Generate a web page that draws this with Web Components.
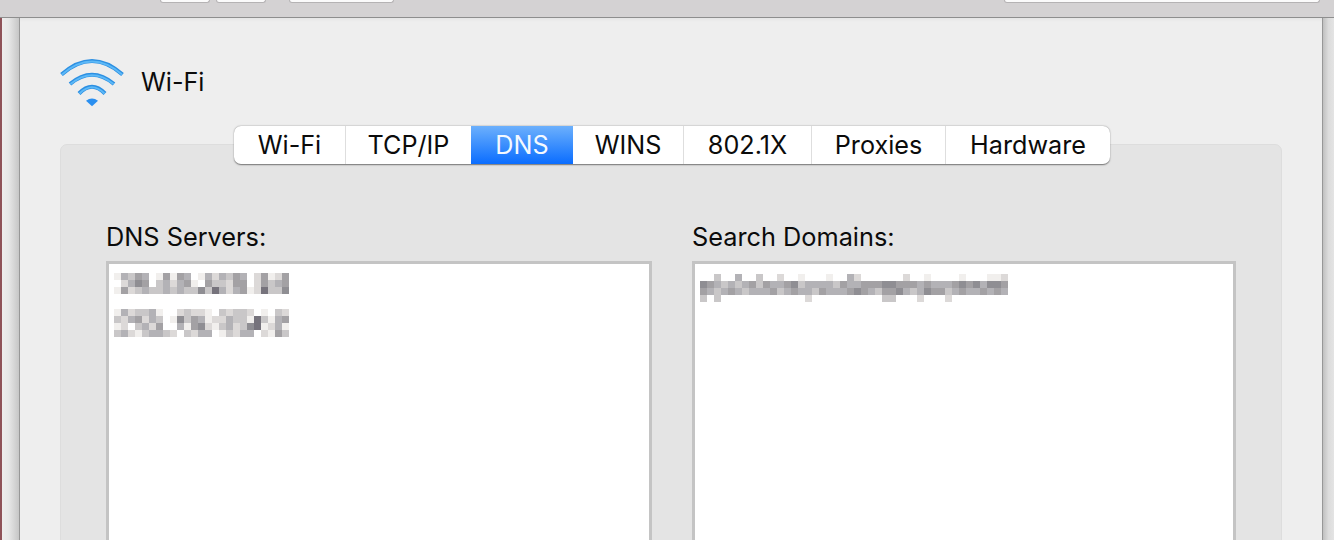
<!DOCTYPE html>
<html lang="en"><head><meta charset="utf-8"><title>Wi-Fi DNS</title>
<style>html,body{margin:0;padding:0;background:#eee}body{width:1334px;height:540px;overflow:hidden;font-family:Inter,"Liberation Sans",sans-serif}</style>
</head><body>
<net-window>
  <net-toolbar slot="toolbar"></net-toolbar>
  <net-header slot="header">Wi-Fi</net-header>
  <net-tabs slot="tabs"></net-tabs>
  <net-panel slot="panel">
    <net-list label="DNS Servers:">
      <net-mosaic cols="25" top="9" data-rows="1435401515401424354025125|0246503424510533255025345|1523433434336374245127336"></net-mosaic>
      <net-mosaic cols="25" top="15" data-rows="1423341002322103233201032|3245243016354122433173145|1203425004156213423671241|3421344320324401324402153"></net-mosaic>
    </net-list>
    <net-list label="Search Domains:">
      <net-mosaic cols="44" top="10" data-rows="00300400300200100010042000000200100001000112|65434345354456344443544555665554544456564665|54345434445345443544456543556434655345445454|30300000000000020000000000330002000200000000"></net-mosaic>
    </net-list>
  </net-panel>
</net-window>
<script>
const def=(name,html,setup)=>customElements.define(name,class extends HTMLElement{
  connectedCallback(){if(this.shadowRoot)return;const r=this.attachShadow({mode:'open'});r.innerHTML=html;if(setup)setup(this,r);}
});
def('net-window',`<style>
:host{display:flex;flex-direction:column;width:1334px;height:540px;overflow:hidden;background:#eee}
.top{flex:none}
.body{flex:1;display:flex;min-height:0}
.red{flex:none;width:2px;background:#8f5258}
.lstrip{flex:none;width:17px;background:linear-gradient(90deg,#efeded,#e6e6e6 40%,#c6c6c6)}
.sheet{flex:none;width:1302px;border-left:1px solid #979797;border-right:1px solid #979797;background:linear-gradient(#e6e6e6,#eeeeee 4px);display:flex;flex-direction:column}
.rstrip{flex:1;background:linear-gradient(90deg,#c0c0c0,#dcdcdc 50%,#e4e4e4)}
</style>
<div class="top"><slot name="toolbar"></slot></div>
<div class="body"><div class="red"></div><div class="lstrip"></div>
<div class="sheet"><slot name="header"></slot><slot name="tabs"></slot><slot name="panel"></slot></div>
<div class="rstrip"></div></div>`);
def('net-toolbar',`<style>
:host{display:flex;height:17px;background:#d4d2d3;border-bottom:1px solid #8e8e8e;padding-left:160px}
i{display:block;height:2px;background:#fbfbfb;border:1px solid #b5b3b4;border-top:0;border-radius:0 0 4px 4px}
</style>
<i style="width:48px"></i><i style="width:48px;margin-left:6px"></i><i style="width:103px;margin-left:23px"></i><i style="width:314px;margin-left:610px"></i>`);
def('net-header',`<style>
:host{display:flex;align-items:center;height:108px;box-sizing:border-box;padding:22px 0 0 39px;flex:none;font:25.2px/1 Inter,"Liberation Sans",sans-serif;color:#0b0b0b}
svg{display:block;flex:none;width:66px;height:50px;margin:0 16px 0 0}
</style>
<svg viewBox="59 58 66 50" aria-hidden="true">
<g fill="none">
<g stroke="#2c8fe2" stroke-width="4"><path d="M61.500 74.500Q92 47.500 122.500 74.500"/><path d="M70 84Q92 65.500 114 84"/><path d="M79 93.500Q92 80 105 93.500"/></g>
<g stroke="#5db9f7" stroke-width="2"><path d="M62 74.500Q92 48.500 122 74.500"/><path d="M70.500 84Q92 66.500 113.500 84"/><path d="M79.500 93.500Q92 81 104.500 93.500"/></g>
</g>
<path d="M86 100.800Q92 96 98 100.800L92 106.200Z" fill="#2a8ff0"/>
</svg><span><slot></slot></span>`);
def('net-tabs',`<style>
:host{display:flex;align-self:flex-start;flex:none;height:38px;margin:0 0 -20px 214px;position:relative;z-index:1;background:#fff;border-radius:7px;box-shadow:0 .5px 1.500px rgba(0,0,0,.5);font:25.2px/38px Inter,"Liberation Sans",sans-serif;color:#0b0b0b;overflow:hidden;box-sizing:border-box;width:876px}
div{flex:none;text-align:center;box-sizing:border-box;border-right:1.500px solid #dedede}
div:last-child{border-right:0}
.on{background:linear-gradient(#6cb0fc,#0a6dff);color:#f4f9ff;border-right:0}
.pre{border-right:0}
</style>
<div style="width:112px">Wi-Fi</div><div class="pre" style="width:125px">TCP/IP</div><div class="on" style="width:102px">DNS</div><div style="width:111px">WINS</div><div style="width:128px">802.1X</div><div style="width:134px">Proxies</div><div style="width:164px">Hardware</div>`);
def('net-panel',`<style>
:host{display:grid;grid-template-columns:546px 544px;column-gap:40px;align-self:flex-start;flex:none;margin-left:40px;width:1222px;height:600px;box-sizing:border-box;padding:79px 45px 0;background:#e4e4e4;border:1px solid #dddddd;border-radius:7px}
</style><slot></slot>`);
def('net-list',`<style>
:host{display:block;font:25.3px/1 Inter,"Liberation Sans",sans-serif;color:#0b0b0b}
h2{font:inherit;margin:0 0 11px 0;height:26px;line-height:26px}
.box{background:#fff;border:3px solid #c4c4c4;box-sizing:border-box;height:500px;padding-left:5px}
</style><h2></h2><div class="box"><slot></slot></div>`,(el,r)=>{r.querySelector('h2').textContent=el.getAttribute('label')});
const P=['#ffffff','#f1efed','#dcd9d8','#c9c7c8','#b3b2b6','#a3a1a4','#8f8e93','#76737c','#68656e'];
def('net-mosaic',`<style>:host{display:block}svg{display:block}</style><svg xmlns="http://www.w3.org/2000/svg" shape-rendering="crispEdges"></svg>`,(el,r)=>{
  const rows=el.dataset.rows.split('|'),cols=+el.getAttribute('cols'),s=7;
  el.style.marginTop=(+el.getAttribute('top'))+'px';
  const svg=r.querySelector('svg');svg.setAttribute('width',cols*s);svg.setAttribute('height',rows.length*s);
  rows.forEach((row,y)=>[...row].forEach((c,x)=>{const q=document.createElementNS('http://www.w3.org/2000/svg','rect');
    q.setAttribute('x',x*s);q.setAttribute('y',y*s);q.setAttribute('width',s);q.setAttribute('height',s);q.setAttribute('fill',P[+c]||'#fff');svg.appendChild(q);}));
});
</script>
</body></html>
